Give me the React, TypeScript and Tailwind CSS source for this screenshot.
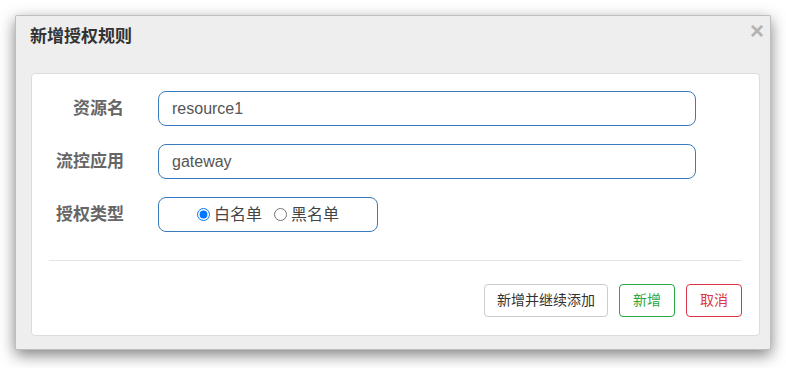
import { useState } from 'react';

export default function App() {
  const [type, setType] = useState<'white' | 'black'>('white');

  return (
    <div className="min-h-screen bg-white p-[15px] font-['Liberation_Sans','Noto_Sans_CJK_SC',sans-serif]">
      <div className="relative w-[756px] rounded-[2px] border border-black/20 bg-[#eeeeee] shadow-[0_5px_15px_rgba(0,0,0,0.5)]">
        <button className="absolute right-[6px] top-[2px] text-[24px] font-bold leading-[26px] text-[#b3b3b3]">×</button>
        <div className="px-[14px] pt-[11px] pb-[26px]">
          <h4 className="text-[17px] font-bold leading-[20px] text-[#333]">新增授权规则</h4>
        </div>
        <div className="mb-[13px] ml-[15px] mr-[10px] rounded-[4px] border border-[#dcdcdc] bg-white px-[17px] pt-[17px] pb-[18px]">
          <div className="flex flex-col gap-[18px]">
            <div className="flex items-center">
              <label className="w-[75px] text-right text-[17px] font-bold text-[#666]">资源名</label>
              <input
                defaultValue="resource1"
                className="ml-[34px] h-[35px] w-[538px] rounded-[8px] border border-[#3a7bbf] px-[13px] text-base text-[#555] outline-none"
              />
            </div>
            <div className="flex items-center">
              <label className="w-[75px] text-right text-[17px] font-bold text-[#666]">流控应用</label>
              <input
                defaultValue="gateway"
                className="ml-[34px] h-[35px] w-[538px] rounded-[8px] border border-[#3a7bbf] px-[13px] text-base text-[#555] outline-none"
              />
            </div>
            <div className="flex items-center">
              <label className="w-[75px] text-right text-[17px] font-bold text-[#666]">授权类型</label>
              <div className="ml-[34px] flex h-[35px] w-[220px] items-center justify-center gap-[12px] rounded-[8px] border border-[#3a7bbf] text-base text-[#444]">
                <label className="flex items-center gap-[4px]">
                  <input
                    type="radio"
                    name="strategy"
                    checked={type === 'white'}
                    onChange={() => setType('white')}
                    className="h-[13px] w-[13px] accent-[#0075ff]"
                  />
                  白名单
                </label>
                <label className="flex items-center gap-[4px]">
                  <input
                    type="radio"
                    name="strategy"
                    checked={type === 'black'}
                    onChange={() => setType('black')}
                    className="h-[13px] w-[13px] accent-[#0075ff]"
                  />
                  黑名单
                </label>
              </div>
            </div>
          </div>
          <div className="mt-[28px] border-t border-[#e5e5e5]" />
          <div className="mt-[23px] flex justify-end gap-[11px]">
            <button className="h-[33px] rounded-[4px] border border-[#cccccc] bg-white px-[12px] text-[14px] text-[#333]">新增并继续添加</button>
            <button className="h-[33px] rounded-[4px] border border-[#28a745] bg-white px-[13px] text-[14px] text-[#28a745]">新增</button>
            <button className="h-[33px] rounded-[4px] border border-[#dc3545] bg-white px-[13px] text-[14px] text-[#dc3545]">取消</button>
          </div>
        </div>
      </div>
    </div>
  );
}
